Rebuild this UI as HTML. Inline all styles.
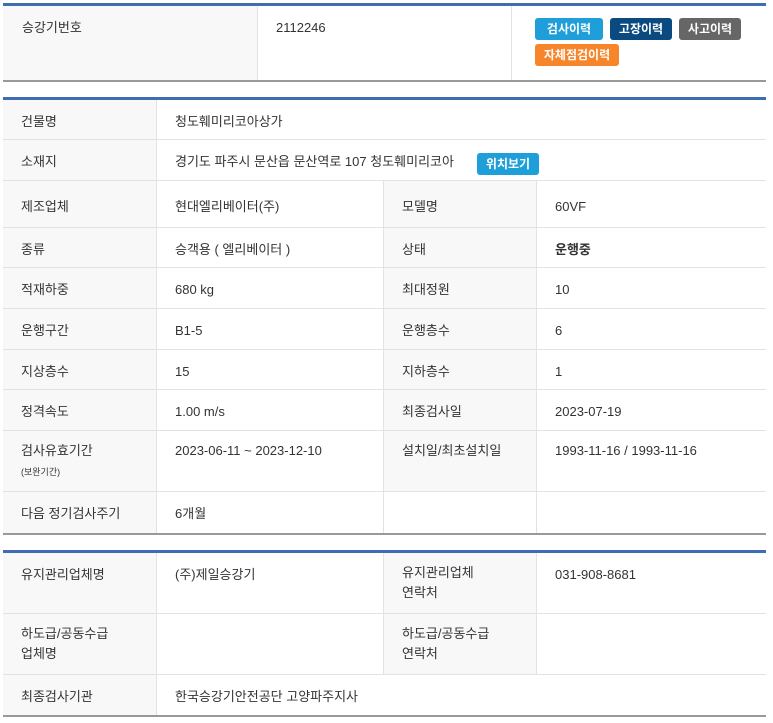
<!DOCTYPE html>
<html><head><meta charset="utf-8"><style>
body{margin:0;background:#fff;font-family:"Liberation Sans","Noto Sans CJK KR",sans-serif;font-size:13px;color:#333;}
.t{position:absolute;left:3px;width:763px;border-top:3px solid #3e6db3;border-bottom:2px solid #999;}
.c{position:absolute;box-sizing:border-box;border-bottom:1px solid #e3e3e3;border-right:1px solid #e3e3e3;padding:12px 0 0 18px;line-height:20px;background:#fff;}
.l{background:#f8f8f8;}
.b{position:absolute;color:#fff;font-size:12px;font-weight:bold;border-radius:3px;text-align:center;line-height:22px;height:22px;}
</style></head><body>
<div class="t" style="top:3px;height:74px">
<div class="c l" style="left:0;top:0;width:255px;height:74px;border-bottom:0;padding-left:19px">승강기번호</div>
<div class="c" style="left:255px;top:0;width:254px;height:74px;border-bottom:0">2112246</div>
<div class="c" style="left:509px;top:0;width:254px;height:74px;border:0"></div>
<div class="b" style="left:532px;top:12px;width:68px;background:#1e9fd9">검사이력</div>
<div class="b" style="left:607px;top:12px;width:62px;background:#0b4a80">고장이력</div>
<div class="b" style="left:676px;top:12px;width:62px;background:#666">사고이력</div>
<div class="b" style="left:532px;top:38px;width:84px;background:#f7852a">자체점검이력</div>
</div>

<div class="t" style="top:97px;height:433px">
<div class="c l" style="left:0;top:0;width:154px;height:40px">건물명</div>
<div class="c" style="left:154px;top:0;width:609px;height:40px;border-right:0">청도훼미리코아상가</div>
<div class="c l" style="left:0;top:40px;width:154px;height:41px">소재지</div>
<div class="c" style="left:154px;top:40px;width:609px;height:41px;border-right:0">경기도 파주시 문산읍 문산역로 107 청도훼미리코아</div>
<div class="b" style="left:474px;top:53px;width:62px;background:#1e9fd9">위치보기</div>

<div class="c l" style="left:0;top:81px;width:154px;height:47px;padding-top:16px">제조업체</div>
<div class="c" style="left:154px;top:81px;width:227px;height:47px;padding-top:16px">현대엘리베이터(주)</div>
<div class="c l" style="left:381px;top:81px;width:153px;height:47px;padding-top:16px">모델명</div>
<div class="c" style="left:534px;top:81px;width:229px;height:47px;padding-top:16px;border-right:0">60VF</div>

<div class="c l" style="left:0;top:128px;width:154px;height:40px">종류</div>
<div class="c" style="left:154px;top:128px;width:227px;height:40px">승객용 ( 엘리베이터 )</div>
<div class="c l" style="left:381px;top:128px;width:153px;height:40px">상태</div>
<div class="c" style="left:534px;top:128px;width:229px;height:40px;border-right:0;font-weight:bold">운행중</div>

<div class="c l" style="left:0;top:168px;width:154px;height:41px">적재하중</div>
<div class="c" style="left:154px;top:168px;width:227px;height:41px">680 kg</div>
<div class="c l" style="left:381px;top:168px;width:153px;height:41px">최대정원</div>
<div class="c" style="left:534px;top:168px;width:229px;height:41px;border-right:0">10</div>

<div class="c l" style="left:0;top:209px;width:154px;height:41px">운행구간</div>
<div class="c" style="left:154px;top:209px;width:227px;height:41px">B1-5</div>
<div class="c l" style="left:381px;top:209px;width:153px;height:41px">운행층수</div>
<div class="c" style="left:534px;top:209px;width:229px;height:41px;border-right:0">6</div>

<div class="c l" style="left:0;top:250px;width:154px;height:40px">지상층수</div>
<div class="c" style="left:154px;top:250px;width:227px;height:40px">15</div>
<div class="c l" style="left:381px;top:250px;width:153px;height:40px">지하층수</div>
<div class="c" style="left:534px;top:250px;width:229px;height:40px;border-right:0">1</div>

<div class="c l" style="left:0;top:290px;width:154px;height:41px">정격속도</div>
<div class="c" style="left:154px;top:290px;width:227px;height:41px">1.00 m/s</div>
<div class="c l" style="left:381px;top:290px;width:153px;height:41px">최종검사일</div>
<div class="c" style="left:534px;top:290px;width:229px;height:41px;border-right:0">2023-07-19</div>

<div class="c l" style="left:0;top:331px;width:154px;height:61px;padding-top:10px">검사유효기간<br><span style="font-size:9px">(보완기간)</span></div>
<div class="c" style="left:154px;top:331px;width:227px;height:61px;padding-top:10px">2023-06-11 ~ 2023-12-10</div>
<div class="c l" style="left:381px;top:331px;width:153px;height:61px;padding-top:10px">설치일/최초설치일</div>
<div class="c" style="left:534px;top:331px;width:229px;height:61px;border-right:0;padding-top:10px">1993-11-16 / 1993-11-16</div>

<div class="c l" style="left:0;top:392px;width:154px;height:41px;border-bottom:0">다음 정기검사주기</div>
<div class="c" style="left:154px;top:392px;width:227px;height:41px;border-bottom:0">6개월</div>
<div class="c" style="left:381px;top:392px;width:153px;height:41px;border-bottom:0"></div>
<div class="c" style="left:534px;top:392px;width:229px;height:41px;border-bottom:0;border-right:0"></div>
</div>

<div class="t" style="top:550px;height:162px">
<div class="c l" style="left:0;top:0;width:154px;height:61px;padding-top:12px">유지관리업체명</div>
<div class="c" style="left:154px;top:0;width:227px;height:61px;padding-top:12px">(주)제일승강기</div>
<div class="c l" style="left:381px;top:0;width:153px;height:61px;padding-top:10px">유지관리업체<br>연락처</div>
<div class="c" style="left:534px;top:0;width:229px;height:61px;border-right:0;padding-top:12px">031-908-8681</div>

<div class="c l" style="left:0;top:61px;width:154px;height:61px;padding-top:10px">하도급/공동수급<br>업체명</div>
<div class="c" style="left:154px;top:61px;width:227px;height:61px"></div>
<div class="c l" style="left:381px;top:61px;width:153px;height:61px;padding-top:10px">하도급/공동수급<br>연락처</div>
<div class="c" style="left:534px;top:61px;width:229px;height:61px;border-right:0"></div>

<div class="c l" style="left:0;top:122px;width:154px;height:40px;border-bottom:0">최종검사기관</div>
<div class="c" style="left:154px;top:122px;width:609px;height:40px;border-bottom:0;border-right:0">한국승강기안전공단 고양파주지사</div>
</div>
</body></html>
